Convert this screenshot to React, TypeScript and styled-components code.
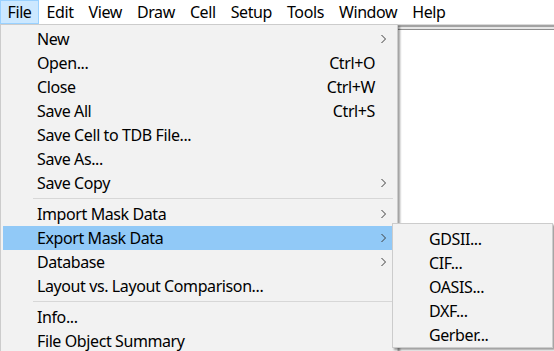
import React from "react";
import styled, { createGlobalStyle } from "styled-components";

const GlobalStyle = createGlobalStyle`
  html, body { margin: 0; padding: 0; background: #ffffff; overflow: hidden; }
  body { font-family: "Noto Sans", "Open Sans", sans-serif; }
  * { box-sizing: border-box; }
`;

const Shell = styled.div`
  position: relative;
  width: 554px;
  height: 351px;
  display: flex;
  flex-direction: column;
  background: #ffffff;
  overflow: hidden;
  font-size: 16px;
  letter-spacing: -0.4px;
  color: #000;
`;

const MenuBar = styled.div`
  height: 25px;
  display: flex;
  align-items: stretch;
  background: #ffffff;
  border-bottom: 1px solid #dadada;
`;

const BarItem = styled.div<{ $active?: boolean }>`
  display: flex;
  align-items: center;
  padding: 0 6.5px 1px;
  line-height: 22px;
  border: 1px solid ${(p) => (p.$active ? "#99d1ff" : "transparent")};
  background: ${(p) => (p.$active ? "#cce8ff" : "transparent")};
`;

const Workspace = styled.div`
  flex: 1;
  display: flex;
  flex-direction: column;
  background: #e6e6e6;
  border-top: 2px solid #a3a3a3;
`;

const Canvas = styled.div`
  flex: 1;
  margin-top: 2px;
  background: #ffffff;
  border-top: 1px solid #8e8e8e;
`;

const Menu = styled.div<{ $left: number; $top: number; $width: number; $height?: number }>`
  position: absolute;
  left: ${(p) => p.$left}px;
  top: ${(p) => p.$top}px;
  width: ${(p) => p.$width}px;
  height: ${(p) => (p.$height ? `${p.$height}px` : "auto")};
  background: #f2f2f2;
  border: 1px solid #cccccc;
  box-shadow: 2px 2px 2px rgba(0, 0, 0, 0.38);
  padding: ${(p) => (p.$height ? "3px 0 0" : "2px 0 0")};
`;

const Item = styled.div<{ $active?: boolean; $indent: number }>`
  display: grid;
  grid-template-columns: 1fr auto 18px;
  align-items: center;
  height: 24px;
  line-height: 24px;
  margin: 0 4px 0 2px;
  padding-left: ${(p) => p.$indent}px;
  background: ${(p) => (p.$active ? "#91c9f7" : "transparent")};
  white-space: nowrap;
`;

const Label = styled.span``;

const Shortcut = styled.span`
  text-align: right;
`;

const ArrowCell = styled.span`
  display: flex;
  align-items: center;
  padding-left: 6px;
  height: 24px;
`;

const Separator = styled.div`
  height: 7px;
  margin: 0 4px 0 32px;
  position: relative;
  &::after {
    content: "";
    position: absolute;
    left: 0;
    right: 0;
    top: 3px;
    height: 1px;
    background: #d7d7d7;
  }
`;

const Chevron = () => (
  <svg width="6" height="10" viewBox="0 0 6 10">
    <polyline points="0.5,1 4.5,5 0.5,9" fill="none" stroke="#3c3c3c" strokeWidth="1" />
  </svg>
);

type Entry =
  | { kind: "item"; label: string; shortcut?: string; sub?: boolean; active?: boolean }
  | { kind: "sep" };

const fileMenu: Entry[] = [
  { kind: "item", label: "New", sub: true },
  { kind: "item", label: "Open...", shortcut: "Ctrl+O" },
  { kind: "item", label: "Close", shortcut: "Ctrl+W" },
  { kind: "item", label: "Save All", shortcut: "Ctrl+S" },
  { kind: "item", label: "Save Cell to TDB File..." },
  { kind: "item", label: "Save As..." },
  { kind: "item", label: "Save Copy", sub: true },
  { kind: "sep" },
  { kind: "item", label: "Import Mask Data", sub: true },
  { kind: "item", label: "Export Mask Data", sub: true, active: true },
  { kind: "item", label: "Database", sub: true },
  { kind: "item", label: "Layout vs. Layout Comparison..." },
  { kind: "sep" },
  { kind: "item", label: "Info..." },
  { kind: "item", label: "File Object Summary" },
];

const exportMenu = ["GDSII...", "CIF...", "OASIS...", "DXF...", "Gerber..."];

const barItems = ["File", "Edit", "View", "Draw", "Cell", "Setup", "Tools", "Window", "Help"];

export default function App() {
  return (
    <>
      <GlobalStyle />
      <Shell>
        <MenuBar>
          {barItems.map((b, i) => (
            <BarItem key={b} $active={i === 0}>
              {b}
            </BarItem>
          ))}
        </MenuBar>
        <Workspace>
          <Canvas />
        </Workspace>

        <Menu $left={0} $top={24} $width={398}>
          {fileMenu.map((e, i) =>
            e.kind === "sep" ? (
              <Separator key={i} />
            ) : (
              <Item key={i} $active={e.active} $indent={34}>
                <Label>{e.label}</Label>
                <Shortcut>{e.shortcut ?? ""}</Shortcut>
                <ArrowCell>{e.sub ? <Chevron /> : null}</ArrowCell>
              </Item>
            )
          )}
        </Menu>

        <Menu $left={392} $top={223} $width={161} $height={125}>
          {exportMenu.map((l) => (
            <Item key={l} $indent={34}>
              <Label>{l}</Label>
              <Shortcut />
              <ArrowCell />
            </Item>
          ))}
        </Menu>
      </Shell>
    </>
  );
}
